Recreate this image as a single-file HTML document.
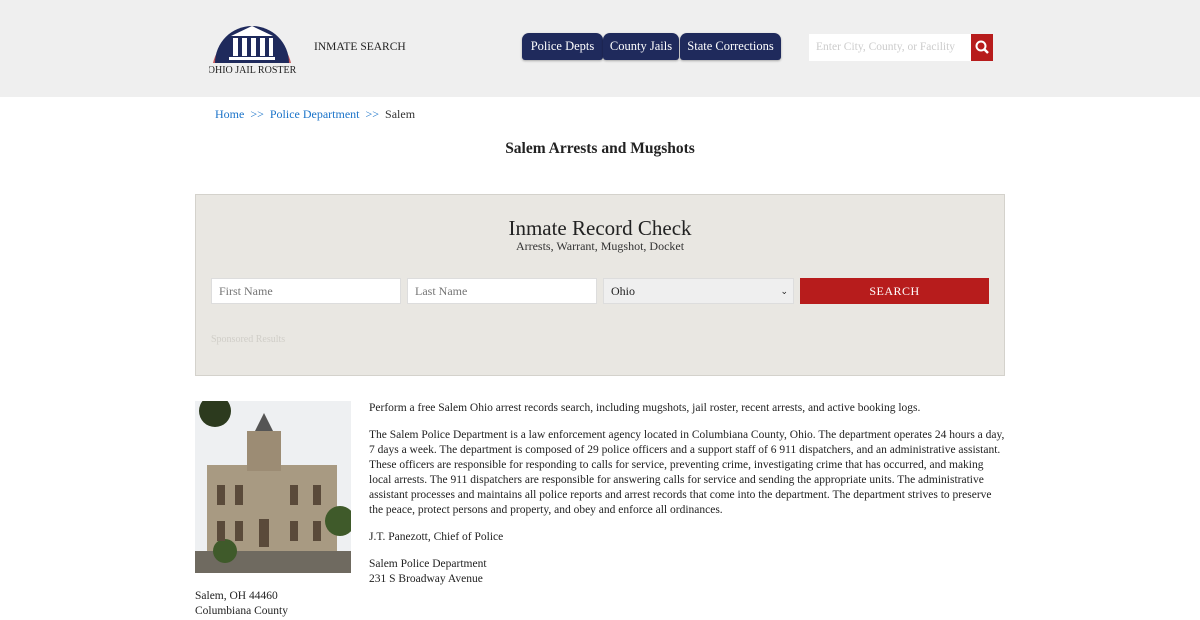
<!DOCTYPE html>
<html><head><style>
*{box-sizing:border-box;margin:0;padding:0}
body{width:1200px;height:620px;overflow:hidden;background:#fff;font-family:"Liberation Serif",serif;color:#222;position:relative}
.a{position:absolute}
.hdr{left:0;top:0;width:1200px;height:97px;background:#efefef}
.tab{top:33px;height:27px;background:#1f2a5c;color:#fff;font-size:12.5px;line-height:27px;text-align:center;border-radius:7px 7px 3px 3px;box-shadow:0 1px 2px rgba(0,0,0,.3)}
p{font-size:11.5px;line-height:15px;color:#222}
input,.sel{position:absolute;top:278px;height:26px;border:1px solid #ddd;background:#fff;font-family:"Liberation Serif",serif;font-size:12px;padding-left:7px;color:#777;line-height:24px}
</style></head><body>
<div class="a hdr"></div>
<svg class="a" style="left:209px;top:20px" width="90" height="56" viewBox="0 0 90 56">
<path d="M4 43 A40 40 0 0 1 82 43 Z" fill="#c8595a"/>
<path d="M6 43 A37 37 0 0 1 80 43 Z" fill="#1f2a5c"/>
<path d="M22 16 L43 6 L64 16 Z" fill="#fff"/>
<rect x="24" y="18" width="5" height="18" fill="#fff"/><rect x="33" y="18" width="5" height="18" fill="#fff"/><rect x="42" y="18" width="5" height="18" fill="#fff"/><rect x="51" y="18" width="5" height="18" fill="#fff"/><rect x="60" y="18" width="4" height="18" fill="#fff"/>
<rect x="20" y="37" width="46" height="3" fill="#fff"/>
<text x="43" y="53" font-family="Liberation Serif" font-size="10" text-anchor="middle" fill="#222">OHIO JAIL ROSTER</text>
</svg>
<div class="a" style="left:314px;top:41px;font-size:11.5px">INMATE SEARCH</div>
<div class="a tab" style="left:522px;width:81px">Police Depts</div>
<div class="a tab" style="left:603px;width:76px">County Jails</div>
<div class="a tab" style="left:680px;width:101px">State Corrections</div>
<div class="a" style="left:809px;top:34px;width:162px;height:27px;background:#fff;font-size:11.5px;color:#ccc;line-height:27px;padding-left:7px">Enter City, County, or Facility</div>
<div class="a" style="left:971px;top:34px;width:22px;height:27px;background:#b71c1c"><svg width="22" height="27"><circle cx="10" cy="12" r="4.5" stroke="#fff" stroke-width="2" fill="none"/><path d="M13 15 L17 19" stroke="#fff" stroke-width="2.5"/></svg></div>
<div class="a" style="left:215px;top:107px;font-size:12px;color:#1a73c9">Home &nbsp;&gt;&gt;&nbsp; Police Department &nbsp;&gt;&gt;&nbsp; <span style="color:#333">Salem</span></div>
<div class="a" style="left:0;width:1200px;top:140px;text-align:center;font-size:15.5px;font-weight:bold;color:#222">Salem Arrests and Mugshots</div>
<div class="a" style="left:195px;top:194px;width:810px;height:182px;background:#e9e7e2;border:1px solid #d4d2cc"></div>
<div class="a" style="left:195px;width:810px;top:216px;text-align:center;font-size:21px;color:#222">Inmate Record Check</div>
<div class="a" style="left:195px;width:810px;top:239px;text-align:center;font-size:12px;color:#333">Arrests, Warrant, Mugshot, Docket</div>
<input style="left:211px;width:190px" placeholder="First Name">
<input style="left:407px;width:190px" placeholder="Last Name">
<div class="sel" style="left:603px;width:191px;background:#efefef;color:#222">Ohio<span style="position:absolute;right:5px;font-size:9px">&#8964;</span></div>
<div class="a" style="left:800px;top:278px;width:189px;height:26px;background:#b71c1c;color:#fff;font-size:12px;text-align:center;line-height:27px;letter-spacing:.5px">SEARCH</div>
<div class="a" style="left:211px;top:334px;font-size:10px;color:#d0cec8">Sponsored Results</div>
<svg class="a" style="left:195px;top:401px" width="156" height="172">
<rect width="156" height="172" fill="#eef0f2"/>
<rect x="12" y="64" width="130" height="90" fill="#a89a82"/>
<rect x="52" y="30" width="34" height="40" fill="#9c8c74"/>
<path d="M60 30 L69 12 L78 30Z" fill="#555"/>
<rect x="0" y="150" width="156" height="22" fill="#6f6a60"/>
<circle cx="20" cy="10" r="16" fill="#2c3a1e"/><circle cx="145" cy="120" r="15" fill="#3f5a2a"/><circle cx="30" cy="150" r="12" fill="#3f5a2a"/>
<g fill="#5a4a3a"><rect x="22" y="84" width="8" height="20"/><rect x="40" y="84" width="8" height="20"/><rect x="95" y="84" width="8" height="20"/><rect x="118" y="84" width="8" height="20"/><rect x="22" y="120" width="8" height="20"/><rect x="40" y="120" width="8" height="20"/><rect x="64" y="118" width="10" height="28"/><rect x="95" y="120" width="8" height="20"/><rect x="118" y="120" width="8" height="20"/></g>
</svg>
<div class="a" style="left:195px;top:589px;font-size:11.5px;line-height:15px">Salem, OH 44460<br>Columbiana County</div>
<div class="a" style="left:369px;top:401px;width:636px">
<p>Perform a free Salem Ohio arrest records search, including mugshots, jail roster, recent arrests, and active booking logs.</p>
<p style="margin-top:12px">The Salem Police Department is a law enforcement agency located in Columbiana County, Ohio. The department operates 24 hours a day, 7 days a week. The department is composed of 29 police officers and a support staff of 6 911 dispatchers, and an administrative assistant. These officers are responsible for responding to calls for service, preventing crime, investigating crime that has occurred, and making local arrests. The 911 dispatchers are responsible for answering calls for service and sending the appropriate units. The administrative assistant processes and maintains all police reports and arrest records that come into the department. The department strives to preserve the peace, protect persons and property, and obey and enforce all ordinances.</p>
<p style="margin-top:12px">J.T. Panezott, Chief of Police</p>
<p style="margin-top:12px">Salem Police Department<br>231 S Broadway Avenue</p>
</div>
</body></html>
